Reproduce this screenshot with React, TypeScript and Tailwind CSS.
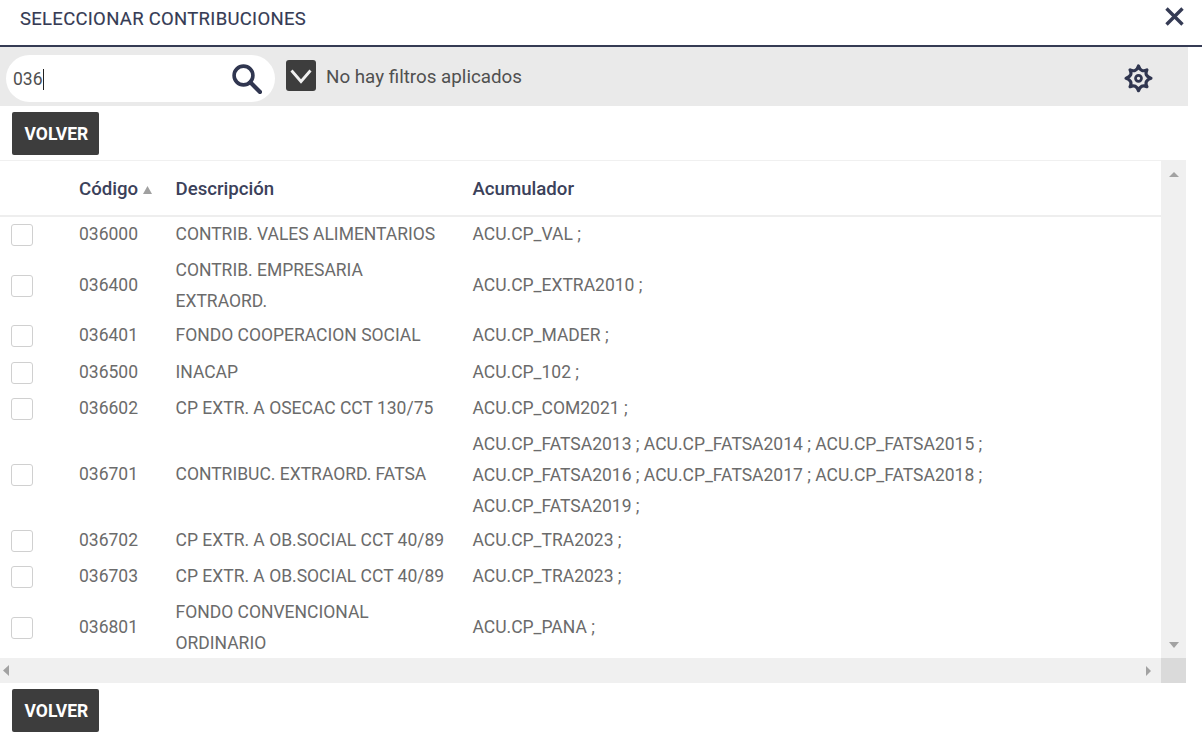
type Row = { code: string; description: string[]; accumulator: string[]; height: string };

const SINGLE = 'h-[36.5px]';
const DOUBLE = 'h-[64.5px]';
const TRIPLE = 'h-[95px]';

const rows: Row[] = [
  { code: '036000', description: ['CONTRIB. VALES ALIMENTARIOS'], accumulator: ['ACU.CP_VAL ;'], height: SINGLE },
  { code: '036400', description: ['CONTRIB. EMPRESARIA', 'EXTRAORD.'], accumulator: ['ACU.CP_EXTRA2010 ;'], height: DOUBLE },
  { code: '036401', description: ['FONDO COOPERACION SOCIAL'], accumulator: ['ACU.CP_MADER ;'], height: SINGLE },
  { code: '036500', description: ['INACAP'], accumulator: ['ACU.CP_102 ;'], height: SINGLE },
  { code: '036602', description: ['CP EXTR. A OSECAC CCT 130/75'], accumulator: ['ACU.CP_COM2021 ;'], height: SINGLE },
  {
    code: '036701',
    description: ['CONTRIBUC. EXTRAORD. FATSA'],
    accumulator: [
      'ACU.CP_FATSA2013 ; ACU.CP_FATSA2014 ; ACU.CP_FATSA2015 ;',
      'ACU.CP_FATSA2016 ; ACU.CP_FATSA2017 ; ACU.CP_FATSA2018 ;',
      'ACU.CP_FATSA2019 ;',
    ],
    height: TRIPLE,
  },
  { code: '036702', description: ['CP EXTR. A OB.SOCIAL CCT 40/89'], accumulator: ['ACU.CP_TRA2023 ;'], height: SINGLE },
  { code: '036703', description: ['CP EXTR. A OB.SOCIAL CCT 40/89'], accumulator: ['ACU.CP_TRA2023 ;'], height: SINGLE },
  { code: '036801', description: ['FONDO CONVENCIONAL', 'ORDINARIO'], accumulator: ['ACU.CP_PANA ;'], height: DOUBLE },
];

function Lines({ lines }: { lines: string[] }) {
  return (
    <div className={`whitespace-nowrap ${lines.length > 1 ? 'pt-[0.9px]' : 'pb-[1.7px]'}`}>
      {lines.map((line) => (
        <div key={line}>{line}</div>
      ))}
    </div>
  );
}

function BackButton() {
  return (
    <button className="flex h-[43px] w-[87px] items-center justify-center rounded-[2px] bg-[#3d3d3d] pt-px pl-px text-[17.5px] font-bold text-white">
      VOLVER
    </button>
  );
}

function TitleBar() {
  return (
    <header className="flex h-[47px] shrink-0 items-start justify-between border-b-2 border-[#353b54] pr-[18px] pl-5">
      <h1 className="pt-[6px] text-[18.5px] leading-[27px] font-normal tracking-[0.29px] text-[#353b54] [-webkit-text-stroke:0.15px_#353b54]">
        SELECCIONAR CONTRIBUCIONES
      </h1>
      <svg className="mt-[7px] h-[19px] w-[19px]" viewBox="0 0 19 19" fill="none" stroke="#353b54" strokeWidth="3.4">
        <path d="M1.5 1.5 17.5 17.5M17.5 1.5 1.5 17.5" />
      </svg>
    </header>
  );
}

function Toolbar() {
  return (
    <div className="flex h-[59px] w-[1188px] shrink-0 items-start bg-[#eaeaea] pr-[35px] pl-1.5">
      <div className="mt-[8px] flex h-[47px] w-[269px] items-center rounded-full bg-white pr-[13px] pl-[7px]">
        <span className="pt-0.5 text-[17.5px] text-[#505050]">036</span>
        <span className="mt-px h-[21px] w-px bg-[#222]" />
        <svg className="ml-auto h-[30px] w-[30px]" viewBox="0 0 30 30" fill="none" stroke="#303650">
          <circle cx="11.5" cy="11.5" r="9.4" strokeWidth="3.6" />
          <path d="M18.3 18.3 28 28" strokeWidth="4.2" strokeLinecap="round" />
        </svg>
      </div>
      <div className="mt-[13px] ml-[11.4px] flex h-[31px] w-[30px] items-center justify-center rounded-[3px] bg-[#3d3d3d]">
        <svg className="h-[18px] w-[22px]" viewBox="0 0 22 18" fill="none" stroke="#f0f0f0" strokeWidth="2.8">
          <path d="M1.5 3.5 11 14.5 20.5 3.5" />
        </svg>
      </div>
      <span className="mt-[17px] ml-[9.6px] text-[18.8px] leading-[27px] text-[#505050]">No hay filtros aplicados</span>
      <svg className="mt-[17px] ml-auto h-[29px] w-[29px]" viewBox="-14.5 -14.3 29 29" fill="none" stroke="#303650" strokeLinecap="round" strokeLinejoin="round">
        <path
          strokeWidth="3.2"
          d="M0 -12.4Q2.3 -5.5 8.4 -8.4Q5.5 -2.3 12.4 0Q5.5 2.3 8.4 8.4Q2.3 5.5 0 12.4Q-2.3 5.5 -8.4 8.4Q-5.5 2.3 -12.4 0Q-5.5 -2.3 -8.4 -8.4Q-2.3 -5.5 0 -12.4Z"
        />
        <circle r="3" strokeWidth="2.7" />
      </svg>
    </div>
  );
}

function TableRow({ row }: { row: Row }) {
  return (
    <div className={`grid grid-cols-[79px_96.5px_297px_1fr] items-center ${row.height} text-[17.5px] leading-[30.7px] text-[#6b6b6b]`}>
      <div className="pl-[11px]">
        <div className="h-[22px] w-[22px] rounded-[3px] border-[1.5px] border-[#d0d0d0] bg-white" />
      </div>
      <div className="pb-[1.7px]">{row.code}</div>
      <Lines lines={row.description} />
      <Lines lines={row.accumulator} />
    </div>
  );
}

function Table() {
  return (
    <section className="grid h-[523px] w-[1186px] shrink-0 grid-cols-[1161px_25px] grid-rows-[498px_25px]">
      <div className="overflow-hidden border-t border-[#f0f0f0]">
        <div className="grid h-[56px] grid-cols-[79px_96.5px_297px_1fr] items-center border-b-2 border-[#eeeeee] pt-[3px] text-[18.65px] font-medium text-[#3b415a]">
          <span />
          <span className="flex items-center gap-[5px]">
            Código
            <svg className="mt-px h-2 w-[9px]" viewBox="0 0 9 8" fill="#a0a0a0">
              <path d="M4.5 0 9 8H0Z" />
            </svg>
          </span>
          <span>Descripción</span>
          <span>Acumulador</span>
        </div>
        {rows.map((row) => (
          <TableRow key={row.code} row={row} />
        ))}
      </div>
      <div className="flex flex-col items-center justify-between bg-[#f0f0f0] pt-[12px] pb-[10px]">
        <svg className="h-[5px] w-[10px]" viewBox="0 0 10 5" fill="#a2a2a2"><path d="M5 0 10 5H0Z" /></svg>
        <svg className="h-[6px] w-[10px]" viewBox="0 0 10 6" fill="#a2a2a2"><path d="M0 0H10L5 6Z" /></svg>
      </div>
      <div className="flex items-center justify-between bg-[#f0f0f0] pr-[10px] pl-[3px]">
        <svg className="h-[11px] w-[6px]" viewBox="0 0 6 11" fill="#a2a2a2"><path d="M6 0V11L0 5.5Z" /></svg>
        <svg className="h-[10px] w-[5px]" viewBox="0 0 5 10" fill="#a2a2a2"><path d="M0 0V10L5 5Z" /></svg>
      </div>
      <div className="bg-[#dadada]" />
    </section>
  );
}

export default function App() {
  return (
    <main className="flex h-[742px] w-[1202px] flex-col overflow-hidden bg-white font-[Roboto,sans-serif]">
      <TitleBar />
      <Toolbar />
      <div className="h-[54px] shrink-0 pt-[6.4px] pl-[12.4px]">
        <BackButton />
      </div>
      <Table />
      <div className="pt-[6.4px] pl-[12.4px]">
        <BackButton />
      </div>
    </main>
  );
}
